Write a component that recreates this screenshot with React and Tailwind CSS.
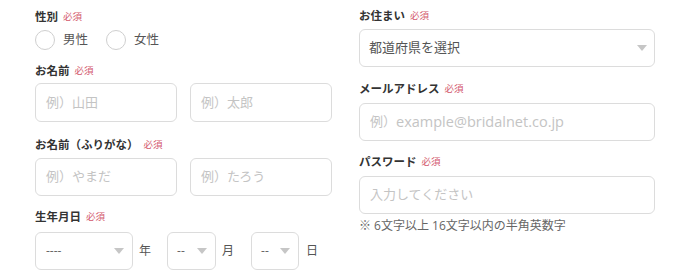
import React from "react";

const font = { fontFamily: '"Open Sans", "Noto Sans CJK JP", "Noto Sans", sans-serif' };

function Label({ text, className = "" }) {
  return (
    <div className={"flex items-center h-[18px] " + className}>
      <span className="text-[11.5px] font-bold text-[#333] leading-none">{text}</span>
      <span className="ml-[5px] text-[9.5px] text-[#d3586c] leading-none">必須</span>
    </div>
  );
}

function Arrow() {
  return (
    <svg width="10" height="6" viewBox="0 0 10 6" className="shrink-0">
      <path d="M0 0 L10 0 L5 6 Z" fill="#c6c6c6" />
    </svg>
  );
}

function TextBox({ children, className = "" }) {
  return (
    <div
      className={
        "h-[38px] border border-[#dcdcdc] rounded-[6px] flex items-center px-[10px] text-[13px] text-[#c4c4c4] " +
        className
      }
    >
      {children}
    </div>
  );
}

function Select({ value, width, pad = "pl-[10px] pr-[8px]", color = "text-[#666]", size = "text-[12px]" }) {
  return (
    <div
      className={
        "h-[38px] border border-[#dcdcdc] rounded-[6px] flex items-center justify-between " +
        pad + " " + width
      }
    >
      <span className={size + " " + color}>{value}</span>
      <Arrow />
    </div>
  );
}

function Radio({ label }) {
  return (
    <div className="flex items-center">
      <div className="w-[20px] h-[20px] rounded-full border border-[#cfcfcf]" />
      <span className="ml-[8px] text-[12.5px] text-[#555]">{label}</span>
    </div>
  );
}

export default function App() {
  return (
    <div className="w-[680px] h-[280px] bg-white flex gap-[27px] pl-[35px] pt-[7px] overflow-hidden" style={font}>
      {/* Left column */}
      <div className="w-[297px] flex flex-col">
        <Label text="性別" className="mt-[1px]" />
        <div className="flex items-center gap-[18px] mt-[4px] h-[20px]">
          <Radio label="男性" />
          <Radio label="女性" />
        </div>
        <Label text="お名前" className="mt-[12px]" />
        <div className="flex gap-[13px] mt-[3px]">
          <TextBox className="flex-1 h-[39px]">例）山田</TextBox>
          <TextBox className="flex-1 h-[39px]">例）太郎</TextBox>
        </div>
        <Label text="お名前（ふりがな）" className="mt-[14px]" />
        <div className="flex gap-[13px] mt-[4px]">
          <TextBox className="flex-1">例）やまだ</TextBox>
          <TextBox className="flex-1">例）たろう</TextBox>
        </div>
        <Label text="生年月日" className="mt-[12px]" />
        <div className="flex items-center mt-[6px]">
          <Select value="----" width="w-[98px]" />
          <span className="ml-[6px] mr-[16px] text-[12px] text-[#555]">年</span>
          <Select value="--" width="w-[49px]" pad="pl-[9px] pr-[8px]" />
          <span className="ml-[6px] mr-[17px] text-[12px] text-[#555]">月</span>
          <Select value="--" width="w-[48px]" pad="pl-[9px] pr-[8px]" />
          <span className="ml-[7px] text-[12px] text-[#555]">日</span>
        </div>
      </div>

      {/* Right column */}
      <div className="w-[296px] flex flex-col">
        <Label text="お住まい" />
        <div className="mt-[4px]">
          <Select value="都道府県を選択" width="w-full" pad="pl-[9px] pr-[7px]" color="text-[#555]" size="text-[13px]" />
        </div>
        <Label text="メールアドレス" className="mt-[13px]" />
        <TextBox className="mt-[5px]">
          例）<span className="text-[14.5px]">example@bridalnet.co.jp</span>
        </TextBox>
        <Label text="パスワード" className="mt-[12px]" />
        <TextBox className="mt-[5px]">入力してください</TextBox>
        <div className="mt-[4px] text-[12px] leading-[16px] text-[#666]">※ 6文字以上 16文字以内の半角英数字</div>
      </div>
    </div>
  );
}
